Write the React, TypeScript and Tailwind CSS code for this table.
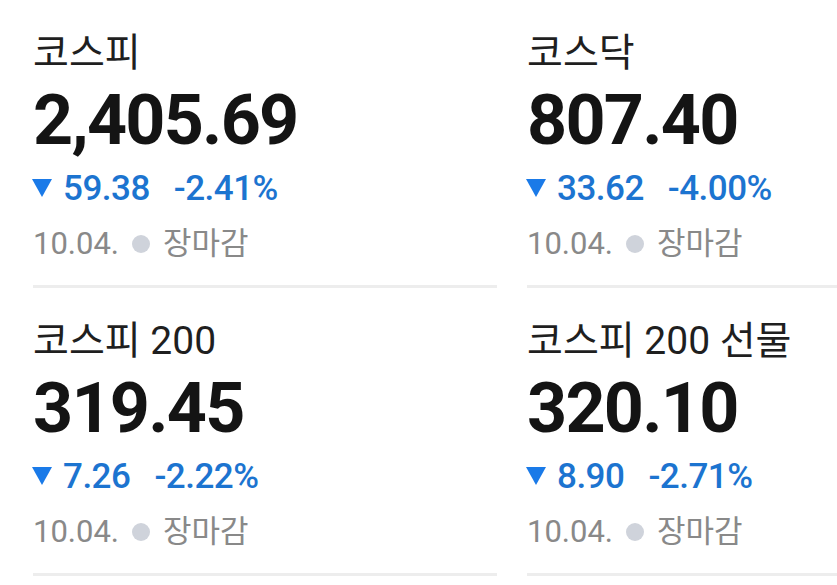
const indices = [
  { name: '코스피', value: '2,405.69', diff: '59.38', rate: '-2.41%' },
  { name: '코스닥', value: '807.40', diff: '33.62', rate: '-4.00%' },
  { name: '코스피 200', value: '319.45', diff: '7.26', rate: '-2.22%' },
  { name: '코스피 200 선물', value: '320.10', diff: '8.90', rate: '-2.71%' },
];

function IndexCard({ name, value, diff, rate }: { name: string; value: string; diff: string; rate: string }) {
  return (
    <div className="h-[288px] border-b-[3px] border-[#ededed] pt-[30px]">
      <div className="text-[39px] leading-[46px] text-[#1f1f1f]">{name}</div>
      <div className="mt-[8px] text-[70px] leading-[72px] font-bold tracking-[-1.75px] text-[#141414]">{value}</div>
      <div className="mt-[11px] flex items-center text-[35px] leading-[44px] font-medium text-[#1c74d0]">
        <svg width="20" height="18" viewBox="0 0 20 18" className="mr-[11px] -ml-px -mt-[2px]">
          <path d="M0 0 H20 L10 18 Z" fill="#1a7ae8" />
        </svg>
        <span className="tracking-[-0.5px]">{diff}</span>
        <span className="ml-[24px] tracking-[-0.5px]">{rate}</span>
      </div>
      <div className="mt-[11px] flex items-center text-[31px] leading-[44px] text-[#898989]">
        <span>10.04.</span>
        <span className="mx-[13px] h-[18px] w-[18px] rounded-full bg-[#cfd3db]" />
        <span>장마감</span>
      </div>
    </div>
  );
}

export default function App() {
  return (
    <div className="h-[585px] w-[837px] overflow-hidden bg-white pl-[33px] font-['Roboto','Noto_Sans_CJK_KR',sans-serif]">
      <div className="grid grid-cols-[464px_464px] gap-x-[30px]">
        {indices.map((item) => (
          <IndexCard key={item.name} {...item} />
        ))}
      </div>
    </div>
  );
}
